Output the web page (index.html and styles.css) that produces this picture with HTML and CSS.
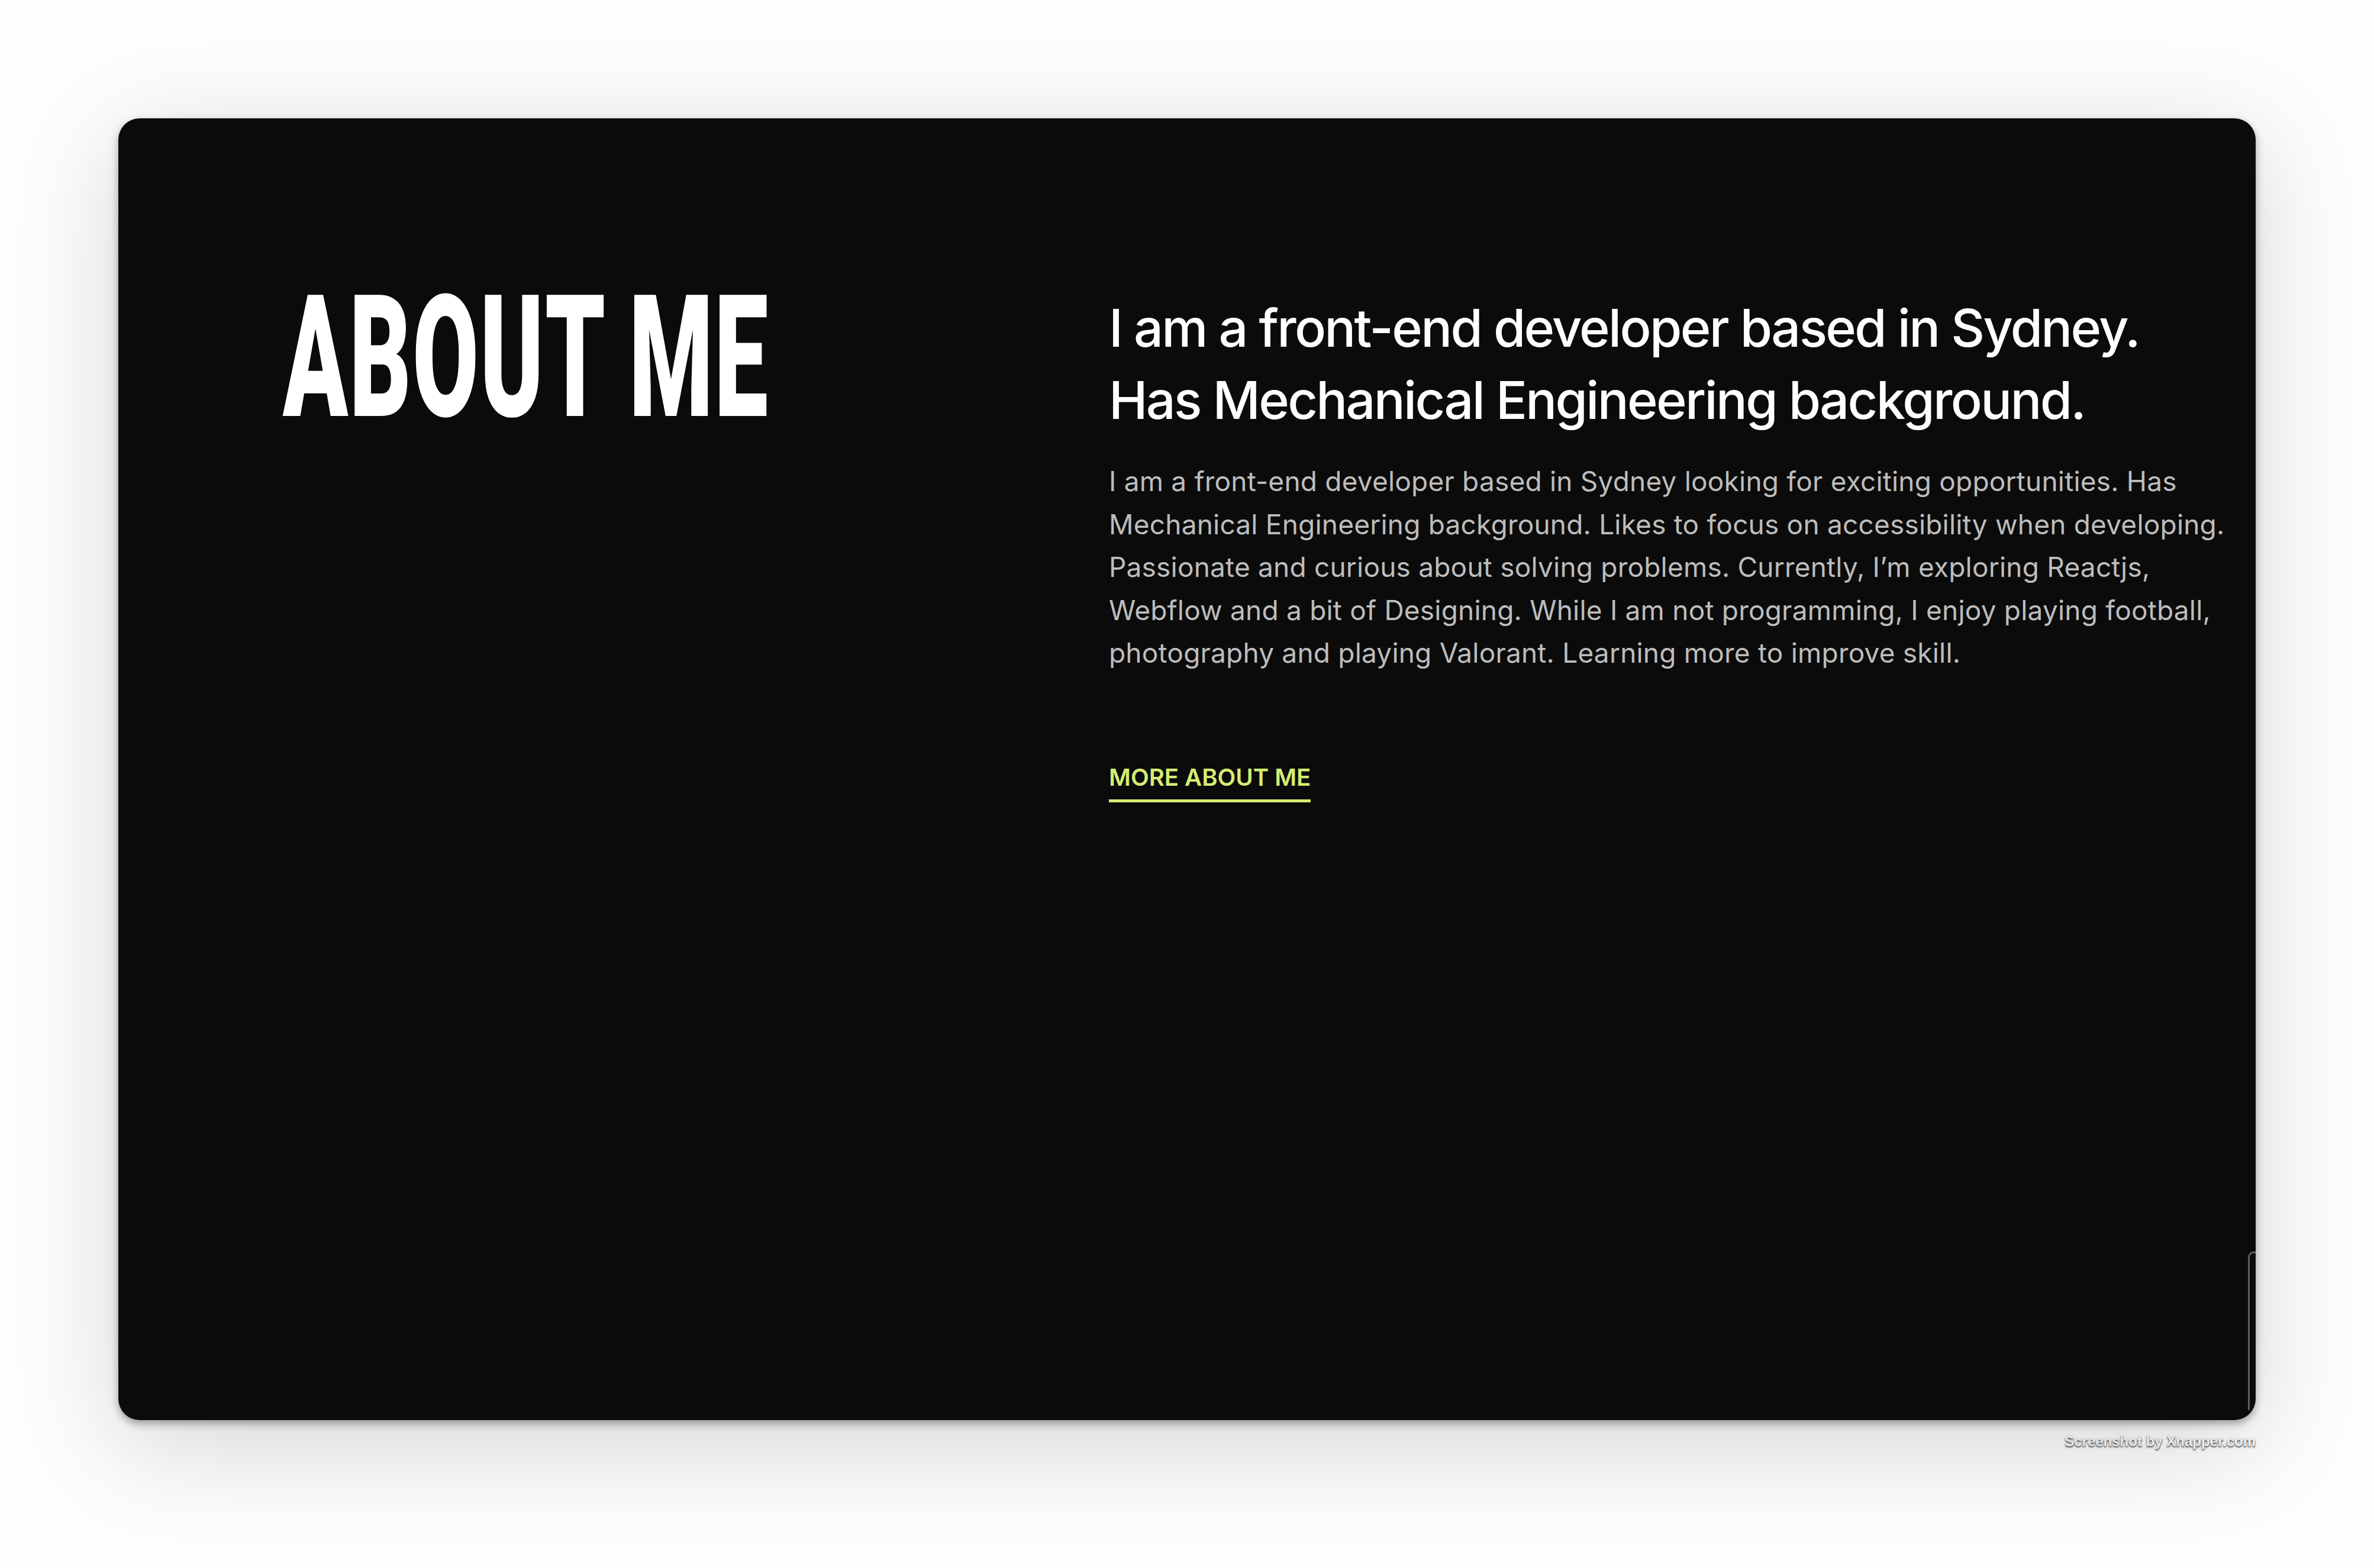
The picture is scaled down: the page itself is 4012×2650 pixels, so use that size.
FILE: index.html
```html
<!DOCTYPE html>
<html lang="en">
<head>
<meta charset="utf-8">
<title>About me</title>
<link rel="stylesheet" href="styles.css">
</head>
<body>
<div class="frame">
  <section class="card">
    <div class="about">
      <div class="about-left">
        <h1 class="title"><span class="title-text">ABOUT ME</span></h1>
      </div>
      <div class="about-right">
        <h2 class="lead">I am a front-end developer based in Sydney.<br>Has Mechanical Engineering background.</h2>
        <p class="body">I am a front-end developer based in Sydney looking for exciting opportunities. Has<br>Mechanical Engineering background. Likes to focus on accessibility when developing.<br>Passionate and curious about solving problems. Currently, I’m exploring Reactjs,<br>Webflow and a bit of Designing. While I am not programming, I enjoy playing football,<br>photography and playing Valorant. Learning more to improve skill.</p>
        <a class="more" href="#">MORE ABOUT ME</a>
      </div>
    </div>
    <div class="scroll-edge"></div>
  </section>
  <div class="credit">Screenshot by Xnapper.com</div>
</div>
</body>
</html>
```

FILE: styles.css
```css
html, body {
  margin: 0;
  padding: 0;
  background: #fdfdfd;
}

.frame {
  box-sizing: border-box;
  min-height: 2650px;
  padding: 200px 200px 0 200px;
}

.card {
  position: relative;
  box-sizing: border-box;
  width: 3612px;
  height: 2200px;
  background: #0b0b0b;
  border-radius: 36px;
  overflow: hidden;
  box-shadow: 0 6px 14px rgba(0, 0, 0, 0.35), 0 40px 180px rgba(0, 0, 0, 0.16);
}

.about {
  display: grid;
  grid-template-columns: 1396px 1fr;
  padding: 261px 40px 0 278px;
}

.title {
  margin: 0;
  font-family: Roboto, "Liberation Sans", sans-serif;
  font-weight: 900;
  font-size: 288px;
  line-height: 288px;
  color: #ffffff;
  white-space: nowrap;
}

.title-text {
  display: inline-block;
  transform: scaleX(0.562);
  transform-origin: left center;
  letter-spacing: 4px;
}

.about-right {
  padding-top: 32px;
}

.lead {
  margin: 0;
  font-family: Inter, "Noto Sans", sans-serif;
  font-weight: 500;
  font-size: 88px;
  line-height: 122px;
  color: #ffffff;
  letter-spacing: -2.7px;
  white-space: nowrap;
}

.body {
  margin: 40px 0 0 0;
  font-family: Inter, "Noto Sans", sans-serif;
  font-weight: 400;
  font-size: 46px;
  line-height: 72.5px;
  color: #bdbdbd;
  letter-spacing: 0.2px;
  white-space: nowrap;
}

.more {
  display: inline-block;
  margin-top: 154px;
  padding-bottom: 17px;
  border-bottom: 5px solid #d5ec72;
  font-family: Inter, "Noto Sans", sans-serif;
  font-weight: 600;
  font-size: 40px;
  line-height: 40px;
  color: #d5ec72;
  text-decoration: none;
}

.scroll-edge {
  position: absolute;
  right: 0;
  bottom: 17px;
  width: 10px;
  height: 265px;
  border-left: 3px solid #5e5e5e;
  border-top: 3px solid #5e5e5e;
  border-top-left-radius: 10px;
}

.credit {
  width: 3612px;
  margin-top: 21px;
  text-align: right;
  font-family: "Liberation Sans", Arial, sans-serif;
  font-weight: 700;
  font-size: 24px;
  line-height: 30px;
  color: #ffffff;
  text-shadow: 0 2px 3px rgba(0, 0, 0, 0.75), 0 0 1px rgba(0, 0, 0, 0.6);
}
```
